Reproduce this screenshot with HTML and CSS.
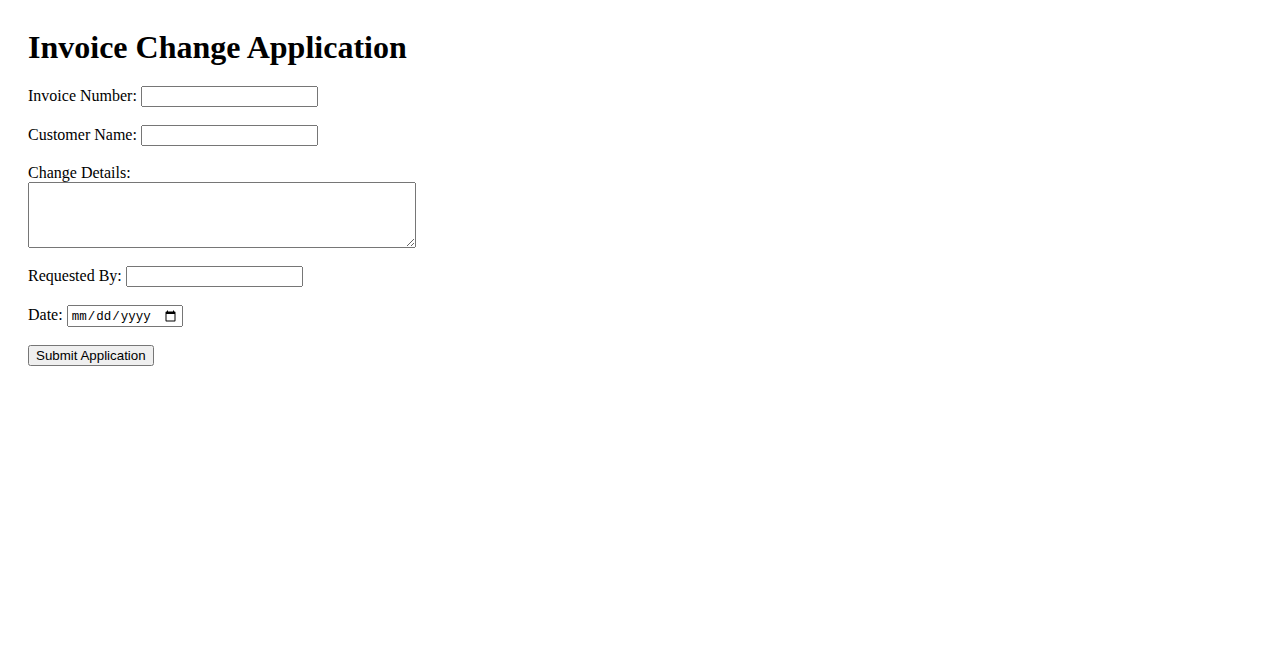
FILE: index.html
```html
<!DOCTYPE html>
<html>
<head>
<meta charset="utf-8">
<title>Invoice Change Application</title>
<link rel="stylesheet" href="styles.css">
</head>
<body>
<div class="page">
<h1 class="title">Invoice Change Application</h1>
<form class="form">
<label for="inv">Invoice Number:</label>
<input type="text" id="inv" class="field"><br><br>
<label for="cust">Customer Name:</label>
<input type="text" id="cust" class="field"><br><br>
<label for="details">Change Details:</label><br>
<textarea id="details" class="area" rows="4" cols="50"></textarea><br><br>
<label for="req">Requested By:</label>
<input type="text" id="req" class="field"><br><br>
<label for="date">Date:</label>
<input type="date" id="date" class="date"><br><br>
<button type="submit" class="submit">Submit Application</button>
</form>
</div>
</body>
</html>
```
FILE: styles.css
```css
body {
  margin: 8px;
  font-family: "Liberation Serif", "Times New Roman", serif;
  font-size: 16px;
  color: #000;
  background: #fff;
}
.page {
  padding: 20px;
}
.title {
  font-size: 32px;
  font-weight: bold;
  margin: 0 0 20px 0;
  padding-top: 1px;
}
.field, .area, .date, .submit {
  font-family: "Liberation Sans", Arial, sans-serif;
  font-size: 13.333px;
  box-sizing: border-box;
}
.field {
  width: 177px;
}
.area {
  width: 388px;
  height: 66px;
  vertical-align: bottom;
}
.date {
  font-family: "Liberation Mono", monospace;
  font-size: 12.5px;
  width: 116px;
  height: 22px;
  padding: 2px 2px 1px;
}
```
